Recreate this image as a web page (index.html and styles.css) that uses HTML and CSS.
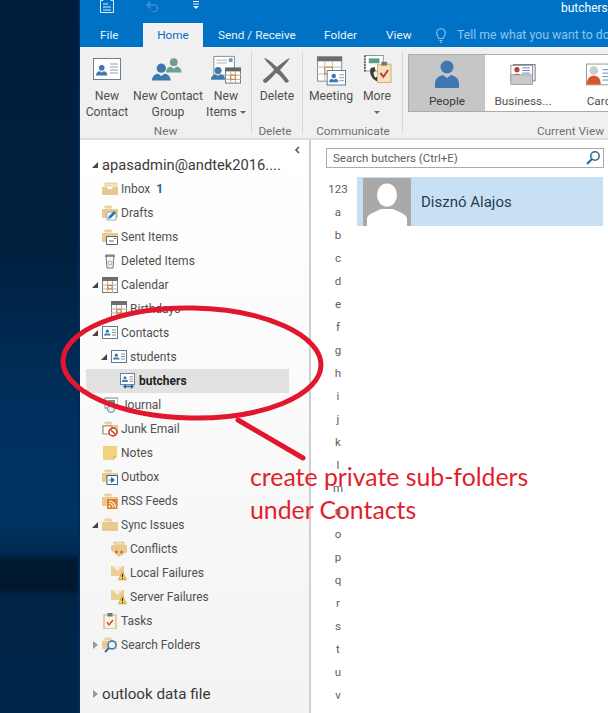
FILE: index.html
```html
<!DOCTYPE html>
<html lang="en">
<head>
<meta charset="utf-8">
<title>butchers - Outlook</title>
<link rel="stylesheet" href="styles.css">
</head>
<body>
<svg class="defs" width="0" height="0" aria-hidden="true">
  <defs>
    <g id="person"><circle cx="6" cy="4" r="3"/><path d="M0 12c0-3 2-4.500 4-4.500l2 1.500 2-1.500c2 0 4 1.500 4 4.500z"/></g>
    <symbol id="i-card" viewBox="0 0 16 14"><rect x=".5" y=".5" width="15" height="12" fill="#fff" stroke="#5d7a96"/><g transform="translate(2 3) scale(.55)" fill="#3f78b0"><use href="#person"/></g><path d="M10 4h4M10 6.500h4M10 9h4" stroke="#8a8a8a"/></symbol>
    <symbol id="i-folder" viewBox="0 0 16 14"><path d="M3 3V1h6l1 2z" fill="#f3e0ba" stroke="#d5b882" stroke-width=".6"/><path d="M0 4h16v9H0z" fill="#e9c98d"/></symbol>
    <symbol id="i-inbox" viewBox="0 0 16 14"><path d="M3 4V1h12v3z" fill="#f4e4c3" stroke="#d7bb86" stroke-width=".7"/><path d="M0 5h5l1 2h4l1-2h5v8H0z" fill="#e6c78d"/></symbol>
    <symbol id="i-drafts" viewBox="0 0 16 16"><use href="#i-folder" width="16" height="14"/><path d="M5 7h9v8H5z" fill="#fff" stroke="#9aa"/><path d="M6 14l1-3 5-5 2 2-5 5z" fill="#2f72b3"/></symbol>
    <symbol id="i-sent" viewBox="0 0 16 16"><use href="#i-folder" width="16" height="14"/><path d="M4.500 7.500h11v8h-11z" fill="#fff" stroke="#5b6770"/><path d="M7 12h5M12 9.500h2" stroke="#5b6770"/></symbol>
    <symbol id="i-trash" viewBox="0 0 16 16"><path d="M4 2h8l-1 13H5z" fill="#f6f6f6" stroke="#777"/><path d="M3 3h10" stroke="#777" stroke-width="1.500"/><circle cx="8" cy="10" r="2" fill="none" stroke="#8fb3a8"/></symbol>
    <symbol id="i-cal" viewBox="0 0 16 16"><rect x=".5" y=".5" width="15" height="15" fill="#fff" stroke="#7a7a7a"/><rect width="16" height="4" fill="#6e6e6e"/><path d="M5.500 4v12M10.500 4v12M0 8h16M0 12h16" stroke="#b0b0b0"/><rect x="6" y="8.500" width="4" height="3.500" fill="none" stroke="#d97a26"/></symbol>
    <symbol id="i-share" viewBox="0 0 16 16"><use href="#i-card" width="15" height="13"/><path d="M4 13.500h9" stroke="#1f6cb0" stroke-width="1.500"/><path d="M6 11l-3 2.500L6 16zM11 11l3 2.500L11 16z" fill="#1f6cb0"/></symbol>
    <symbol id="i-journal" viewBox="0 0 16 16"><rect x="3" y="1" width="13" height="10" fill="#fff" stroke="#6f8f85"/><rect x="6" y="3" width="7" height="4" fill="#5d9a86"/><circle cx="9" cy="12" r="3.500" fill="#e9eef2" stroke="#6b7f92"/></symbol>
    <symbol id="i-junk" viewBox="0 0 16 16"><use href="#i-folder" width="16" height="14"/><path d="M1 5h9v8H1z" fill="#fff" stroke="#888"/><circle cx="11" cy="11" r="4" fill="#fff" stroke="#cc3a1e" stroke-width="1.500"/><path d="M8.500 8.500l5 5" stroke="#cc3a1e" stroke-width="1.500"/></symbol>
    <symbol id="i-note" viewBox="0 0 16 16"><path d="M1 1h14v10l-4 4H1z" fill="#f1d27f"/><path d="M11 15v-4h4z" fill="#d9b75e"/></symbol>
    <symbol id="i-outbox" viewBox="0 0 16 16"><use href="#i-folder" width="16" height="14"/><rect x="5" y="6.500" width="10.500" height="9" fill="#fff" stroke="#41618a"/><path d="M7 11h4M9.500 8.500l3 2.500-3 2.500z" fill="#2c6fb4" stroke="#2c6fb4"/></symbol>
    <symbol id="i-rss" viewBox="0 0 16 16"><use href="#i-folder" width="16" height="14"/><rect x="5" y="6" width="10.500" height="10" fill="#d9822b"/><circle cx="7.500" cy="13.500" r="1" fill="#fff"/><path d="M7 10.500a4 4 0 0 1 4 4M7 8a6.500 6.500 0 0 1 6.500 6.500" fill="none" stroke="#fff" stroke-width="1.200"/></symbol>
    <symbol id="i-conflict" viewBox="0 0 16 16"><path d="M3 3V1h10v3z" fill="#f3e0ba" stroke="#d5b882" stroke-width=".6"/><path d="M0 4h16v7l-8 5-8-7z" fill="#e9c98d"/><path d="M4 11h3M5.500 9.500v3M9 11h3M10.500 9.500v3" stroke="#c9541a"/></symbol>
    <symbol id="i-fail" viewBox="0 0 16 16"><path d="M0 1h13v10H0z" fill="#eccf98"/><path d="M0 1l6.500 6L13 1" fill="#f7e9cd" stroke="#d7b574" stroke-width=".7"/><path d="M11.500 6l4 9h-8z" fill="#f0c94e" stroke="#a98a28" stroke-width=".5"/><path d="M11.500 9v3M11.500 13v1.200" stroke="#222"/></symbol>
    <symbol id="i-tasks" viewBox="0 0 16 16"><rect x="2" y="2" width="12" height="14" fill="#faf3e2" stroke="#c9a970"/><rect x="5.500" y="0" width="5" height="3.500" fill="#777"/><path d="M5 9l2 3 4-5" fill="none" stroke="#c43d2b" stroke-width="1.300"/></symbol>
    <symbol id="i-search" viewBox="0 0 16 16"><use href="#i-folder" width="15" height="13"/><circle cx="10" cy="8" r="4" fill="#eaf3fa" stroke="#2f6fa8" stroke-width="1.400"/><path d="M7 11l-4 4" stroke="#2f6fa8" stroke-width="2"/></symbol>
    <symbol id="i-mag" viewBox="0 0 16 16"><circle cx="10" cy="6" r="4.200" fill="none" stroke="#2b6a8f" stroke-width="1.500"/><path d="M7 9l-5 5" stroke="#2b6a8f" stroke-width="2.200"/></symbol>
  </defs>
</svg>

<div class="screen">
  <div class="desktop"></div>
  <div class="window">
    <header class="titlebar">
      <div class="qat">
        <svg class="qat-send" viewBox="0 0 16 16"><path d="M4 .5h8v3h2.500v12h-13v-12H4z" fill="none" stroke="#dcecf8"/><path d="M4 7h5M4 10h8M4 13h8" stroke="#dcecf8"/></svg>
        <svg class="qat-undo" viewBox="0 0 14 12"><path d="M3 5h6a3.500 3.500 0 0 1 0 7H6M5.500 1.500L2 5l3.500 3.500" fill="none" stroke="#3e8fd2" stroke-width="1.600"/></svg>
        <svg class="qat-more" viewBox="0 0 8 8"><path d="M1 .5h6M1 3h6" stroke="#e6f1fa"/><path d="M1 5h6L4 8z" fill="#e6f1fa"/></svg>
      </div>
      <span class="title">butchers</span>
    </header>

    <nav class="tabs">
      <span class="tab tab-file">File</span>
      <span class="tab tab-home">Home</span>
      <span class="tab tab-send">Send / Receive</span>
      <span class="tab tab-folder">Folder</span>
      <span class="tab tab-view">View</span>
      <svg class="bulb" viewBox="0 0 10 15"><path d="M3 10.500C2 8.500 .7 7.500.7 5a4.300 4.300 0 0 1 8.600 0c0 2.500-1.300 3.500-2.300 5.500zM3.500 12.500h3M4 14.300h2" fill="none" stroke="#8cc6ef" stroke-width="1.100"/></svg>
      <span class="tell">Tell me what you want to do</span>
    </nav>

    <section class="ribbon">
      <div class="group group-new">
        <div class="buttons">
          <div class="btn btn-contact">
            <svg class="ico" viewBox="0 0 30 26"><rect x="1.500" y="2.500" width="27" height="21" fill="#fff" stroke="#6b7f92"/><g transform="translate(4 8) scale(.95)" fill="#3f78b0"><use href="#person"/></g><path d="M18 8h8M18 11h8M18 14h8M18 17h8" stroke="#999"/></svg>
            <span>New<br>Contact</span>
          </div>
          <div class="btn btn-group">
            <svg class="ico" viewBox="0 0 32 26"><g transform="translate(14 1) scale(1.300)" fill="#6fa08f"><use href="#person"/></g><g transform="translate(0 6) scale(1.550)" fill="#3f78b0"><use href="#person"/></g></svg>
            <span>New Contact<br>Group</span>
          </div>
          <div class="btn btn-items">
            <svg class="ico" viewBox="0 0 32 30"><path d="M3 1h22v20H3z" fill="#fff" stroke="#888"/><path d="M6 5h11M6 8h11" stroke="#aaa"/><rect x="19" y="3" width="4" height="4" fill="#6f97bd"/><g transform="translate(0 11) scale(1.250)" fill="#3f78b0"><use href="#person"/></g><rect x="15.500" y="13.500" width="16" height="16" fill="#fff" stroke="#777"/><rect x="15" y="13" width="17" height="4" fill="#666"/><path d="M21 17v13M26 17v13M15 21h17M15 25.500h17" stroke="#aaa"/><rect x="21" y="21" width="5" height="4.500" fill="none" stroke="#d97a26"/></svg>
            <span>New<br>Items <i class="caret"></i></span>
          </div>
        </div>
        <div class="group-label">New</div>
      </div>

      <div class="group group-delete">
        <div class="buttons">
          <div class="btn btn-delete">
            <svg class="ico" viewBox="0 0 30 28"><path d="M2 2c5 1 9 6 13 9 4-3 8-7 13-9-3 5-7 8-10 12 3 3 6 7 9 11-1 2-3 2-4 1-3-4-6-8-9-9-3 3-6 7-10 10-2 0-3-1-3-3 4-3 8-7 11-10C10 10 5 7 2 2z" fill="#6e6e6e"/></svg>
            <span>Delete</span>
          </div>
        </div>
        <div class="group-label">Delete</div>
      </div>

      <div class="group group-comm">
        <div class="buttons">
          <div class="btn btn-meeting">
            <svg class="ico" viewBox="0 0 30 30"><rect x=".5" y=".5" width="25" height="25" fill="#fff" stroke="#8a8a8a"/><rect width="26" height="5" fill="#6e6e6e"/><path d="M8 5v20M16 5v20M0 11h26M0 18h26" stroke="#bbb"/><rect x="8" y="11" width="8" height="7" fill="none" stroke="#d97a26"/><rect x="10.500" y="14.500" width="19" height="15" fill="#fff" stroke="#5d7a96"/><g transform="translate(12.500 17) scale(.8)" fill="#3f78b0"><use href="#person"/></g><path d="M23 19h5M23 22h5M23 25h5" stroke="#999"/></svg>
            <span>Meeting</span>
          </div>
          <div class="btn btn-more">
            <svg class="ico" viewBox="0 0 30 32"><rect x="2" y="1" width="19" height="16" fill="#fff" stroke="#8a9a93"/><path d="M2 1v17" stroke="#555" stroke-dasharray="1.500 1.500" stroke-width="2"/><rect x="6" y="4" width="11" height="5" fill="#5d9a86"/><path d="M8 14c-2 5 1 12 7 14l2-3-3-2-1 1c-2-2-2-4-2-6l2-1-1-4z" fill="#3c3c3c"/><rect x="15" y="10" width="14" height="19" fill="#f3e2bd" stroke="#cdb078"/><rect x="19" y="7.500" width="6" height="4" fill="#777"/><path d="M18 19l3 4 5-7" fill="none" stroke="#c43d2b" stroke-width="2"/></svg>
            <span>More<br><i class="caret"></i></span>
          </div>
        </div>
        <div class="group-label">Communicate</div>
      </div>

      <div class="group group-view">
        <div class="gallery">
          <div class="view view-on">
            <svg class="view-ico" viewBox="0 0 24 28"><circle cx="12" cy="7" r="6.500" fill="#3f78b0"/><path d="M0 28v-4c0-6 4-8 8-9l4 3 4-3c4 1 8 3 8 9v4z" fill="#3f78b0"/></svg>
            <span>People</span>
          </div>
          <div class="view">
            <svg class="view-ico" viewBox="0 0 30 26"><rect x="4" y="2" width="25" height="19" fill="#e9ecef" stroke="#6b7280"/><rect x="1" y="3" width="25" height="18" fill="#fff" stroke="#8a8a8a"/><circle cx="8" cy="8" r="3" fill="#b9443a"/><path d="M4 15c0-3 8-3 8 0z" fill="#b9443a"/><path d="M14 6h9M14 9h9M14 12h9" stroke="#4f7ca8"/><rect x="1" y="14" width="25" height="11" fill="#c9c9c9" stroke="#999"/></svg>
            <span>Business...</span>
          </div>
          <div class="view">
            <svg class="view-ico" viewBox="0 0 30 26"><rect x=".5" y="1.500" width="29" height="24" fill="#fff" stroke="#8a8a8a"/><circle cx="9" cy="9" r="5" fill="#c9cbd0"/><path d="M1 25c0-8 4-10 8-10s8 2 8 10z" fill="#d8572a"/><path d="M19 8h10M19 12h10M19 16h10M19 20h10" stroke="#4f7ca8"/></svg>
            <span>Card</span>
          </div>
        </div>
        <div class="group-label group-label-view">Current View</div>
      </div>
    </section>

    <main class="body">
      <aside class="folders">
        <svg class="collapse" viewBox="0 0 6 8"><path d="M5 1L2 4l3 3" fill="none" stroke="#555" stroke-width="1.600"/></svg>
        <div class="row account"><i class="arrow open"></i><span>apasadmin@andtek2016....</span></div>
        <div class="row"><i class="arrow"></i><svg class="fi"><use href="#i-inbox"/></svg><span>Inbox</span><b class="count">1</b></div>
        <div class="row"><i class="arrow"></i><svg class="fi"><use href="#i-drafts"/></svg><span>Drafts</span></div>
        <div class="row"><i class="arrow"></i><svg class="fi"><use href="#i-sent"/></svg><span>Sent Items</span></div>
        <div class="row"><i class="arrow"></i><svg class="fi"><use href="#i-trash"/></svg><span>Deleted Items</span></div>
        <div class="row"><i class="arrow open"></i><svg class="fi"><use href="#i-cal"/></svg><span>Calendar</span></div>
        <div class="row lvl1"><i class="arrow"></i><svg class="fi"><use href="#i-cal"/></svg><span>Birthdays</span></div>
        <div class="row"><i class="arrow open"></i><svg class="fi"><use href="#i-card"/></svg><span>Contacts</span></div>
        <div class="row lvl1"><i class="arrow open"></i><svg class="fi"><use href="#i-card"/></svg><span>students</span></div>
        <div class="row lvl2 selected"><i class="arrow"></i><svg class="fi"><use href="#i-share"/></svg><span>butchers</span></div>
        <div class="row"><i class="arrow"></i><svg class="fi"><use href="#i-journal"/></svg><span>Journal</span></div>
        <div class="row"><i class="arrow"></i><svg class="fi"><use href="#i-junk"/></svg><span>Junk Email</span></div>
        <div class="row"><i class="arrow"></i><svg class="fi"><use href="#i-note"/></svg><span>Notes</span></div>
        <div class="row"><i class="arrow"></i><svg class="fi"><use href="#i-outbox"/></svg><span>Outbox</span></div>
        <div class="row"><i class="arrow"></i><svg class="fi"><use href="#i-rss"/></svg><span>RSS Feeds</span></div>
        <div class="row"><i class="arrow open"></i><svg class="fi"><use href="#i-folder"/></svg><span>Sync Issues</span></div>
        <div class="row lvl1"><i class="arrow"></i><svg class="fi"><use href="#i-conflict"/></svg><span>Conflicts</span></div>
        <div class="row lvl1"><i class="arrow"></i><svg class="fi"><use href="#i-fail"/></svg><span>Local Failures</span></div>
        <div class="row lvl1"><i class="arrow"></i><svg class="fi"><use href="#i-fail"/></svg><span>Server Failures</span></div>
        <div class="row"><i class="arrow"></i><svg class="fi"><use href="#i-tasks"/></svg><span>Tasks</span></div>
        <div class="row"><i class="arrow closed"></i><svg class="fi"><use href="#i-search"/></svg><span>Search Folders</span></div>
        <div class="row account datafile"><i class="arrow closed"></i><span>outlook data file</span></div>
      </aside>

      <section class="people">
        <div class="searchbox">
          <span>Search butchers (Ctrl+E)</span>
          <svg class="mag"><use href="#i-mag"/></svg>
        </div>
        <div class="list">
          <div class="index">
            <span>123</span><span>a</span><span>b</span><span>c</span><span>d</span><span>e</span><span>f</span><span>g</span><span>h</span><span>i</span><span>j</span><span>k</span><span>l</span><span>m</span><span>n</span><span>o</span><span>p</span><span>q</span><span>r</span><span>s</span><span>t</span><span>u</span><span>v</span>
          </div>
          <div class="person-card">
            <svg class="avatar" viewBox="0 0 48 48"><rect width="48" height="48" fill="#a9a9a9"/><ellipse cx="24" cy="17" rx="10" ry="11.500" fill="#fff"/><path d="M4 48v-7c0-5 8-7 14-10h12c6 3 14 5 14 10v7z" fill="#fff"/></svg>
            <span class="person-name">Disznó Alajos</span>
          </div>
        </div>
      </section>
    </main>
  </div>
</div>

<svg class="markup" viewBox="0 0 608 713" aria-hidden="true">
  <ellipse cx="192" cy="363" rx="129" ry="55" transform="rotate(1 192 363)" fill="none" stroke="#e2162c" stroke-width="5"/>
  <path d="M238 420L303 458" stroke="#e2162c" stroke-width="5" stroke-linecap="round"/>
</svg>
<p class="note">create private sub-folders<br>under Contacts</p>
</body>
</html>
```
FILE: styles.css
```css
* { box-sizing: border-box; }
html, body { margin: 0; padding: 0; }
body {
  position: relative;
  width: 608px;
  height: 713px;
  overflow: hidden;
  font-family: Roboto, "Open Sans", sans-serif;
  font-size: 12px;
  color: #505050;
  background: #fff;
}
.defs { position: absolute; }
.screen { display: flex; width: 608px; height: 713px; }
.desktop {
  flex: 0 0 80px;
  background: linear-gradient(180deg,
    #001c3c 0, #00203f 250px, #002f5c 400px, #003463 520px, #002a52 553px,
    #001a33 560px, #00172f 588px, #002546 598px, #00264a 713px);
  border-right: 2px solid #002a58;
}
.window { flex: 1; display: flex; flex-direction: column; min-width: 0; }

.titlebar { height: 23px; background: #0072c6; display: flex; position: relative; flex: none; }
.qat { display: flex; align-items: flex-start; }
.qat-send { width: 16px; height: 16px; margin: -3px 0 0 19px; }
.qat-undo { width: 14px; height: 12px; margin: 0 0 0 30px; }
.qat-more { width: 8px; height: 8px; margin: 1px 0 0 33px; }
.title { position: absolute; left: 481px; top: 0; color: #fff; font-size: 12px; line-height: 17px; }

.tabs { height: 24px; flex: none; background: #0072c6; display: flex; align-items: stretch; color: #e8f3fb; font-size: 11.800px; line-height: 24px; white-space: nowrap; overflow: hidden; }
.tab, .tell { flex: none; }
.tab-file { margin-left: 20px; width: 18px; }
.tab-home { margin-left: 25px; width: 60px; background: #f1f1f1; color: #0a6cbc; text-align: center; }
.tab-send { margin-left: 15px; width: 77px; }
.tab-folder { margin-left: 29px; width: 33px; }
.tab-view { margin-left: 29px; width: 25px; }
.bulb { width: 10px; height: 15px; margin: 5px 0 0 25px; flex: none; }
.tell { margin-left: 11px; color: #8cc6ef; font-size: 12.300px; }

.ribbon { height: 93px; flex: none; background: #f0f0f0; border-bottom: 2px solid #dcdcdc; display: flex; font-size: 12.200px; }
.group { display: flex; flex-direction: column; border-right: 1px solid #d8d8d8; margin: 4px 0; }
.group-new { width: 172px; padding-left: 4px; }
.group-delete { width: 51px; }
.group-comm { width: 100px; padding-left: 5px; }
.group-view { flex: 1; border-right: 0; padding-left: 5px; min-width: 0; }
.buttons { display: flex; gap: 2px; height: 73px; flex: none; }
.btn { display: flex; flex-direction: column; align-items: center; text-align: center; line-height: 16px; white-space: nowrap; }
.btn .ico { flex: none; }
.btn-contact { width: 46px; }
.btn-group { width: 72px; }
.btn-items { width: 40px; }
.btn-delete { width: 50px; }
.btn-meeting { width: 46px; }
.btn-more { width: 42px; }
.btn-contact .ico { width: 30px; height: 26px; margin-top: 5px; margin-bottom: 6px; }
.btn-group .ico { width: 32px; height: 26px; margin-top: 5px; margin-bottom: 6px; }
.btn-items .ico { width: 30px; height: 29px; margin-top: 4px; margin-bottom: 4px; }
.btn-delete .ico { width: 30px; height: 28px; margin-top: 5px; margin-bottom: 4px; }
.btn-meeting .ico { width: 29px; height: 30px; margin-top: 5px; margin-bottom: 2px; }
.btn-more .ico { width: 29px; height: 32px; margin-top: 3px; margin-bottom: 2px; }
.caret { display: inline-block; border: 3px solid transparent; border-top: 3px solid #666; border-bottom: 0; vertical-align: middle; }
.group-label { height: 11px; text-align: center; font-size: 11.800px; line-height: 14px; color: #707070; white-space: nowrap; padding-right: 4px; }
.group-label-view { text-align: right; padding-right: 4px; margin-top: 12px; }
.gallery { display: flex; height: 58px; margin-top: 3px; background: #fff; border: 1px solid #ababab; width: 210px; flex: none; }
.view { flex: 0 0 76px; display: flex; flex-direction: column; align-items: center; line-height: 16px; white-space: nowrap; overflow: hidden; font-size: 11.800px; }
.view-on { background: #c6c6c6; color: #383838; }
.view-ico { width: 26px; height: 28px; margin: 5px 0 5px; flex: none; }

.body { flex: 1; display: flex; min-height: 0; }
.folders { position: relative; width: 231px; flex: none; padding: 13px 0 0 6px; background: linear-gradient(180deg, #fff 0, #fbfbfb 40%, #f3f3f3 100%); border-right: 2px solid #cfcfcf; }
.collapse { position: absolute; left: 214px; top: 6px; width: 6px; height: 8px; }
.row { display: flex; align-items: center; height: 24px; width: 203px; white-space: nowrap; padding-bottom: 1px; }
.lvl1 { padding-left: 9px; }
.lvl2 { padding-left: 18px; }
.selected { background: #e1e1e1; color: #222; font-weight: 700; }
.arrow { flex: 0 0 16px; height: 8px; position: relative; }
.arrow.open::before { content: ""; position: absolute; right: 4px; top: 1px; border-style: solid; border-width: 0 0 6px 6px; border-color: transparent transparent #444 transparent; }
.arrow.closed::before { content: ""; position: absolute; left: 7px; top: 0; border-style: solid; border-width: 4px 0 4px 5px; border-color: transparent transparent transparent #999; }
.fi { flex: 0 0 16px; width: 16px; height: 16px; margin-right: 3px; }
.count { color: #2d5d86; margin-left: 6px; font-weight: 700; }
.account { font-size: 14.700px; color: #3a3a3a; }
.datafile { margin-top: 25px; font-size: 15.200px; }

.people { flex: 1; min-width: 0; padding: 8px 4px 0 15px; }
.searchbox { height: 20px; border: 1px solid #ababab; display: flex; align-items: center; justify-content: space-between; padding: 0 2px 0 6px; font-size: 11.500px; color: #606060; background: #fff; }
.mag { width: 16px; height: 16px; }
.list { display: flex; margin-top: 9px; }
.index { flex: 0 0 24px; padding-top: 1px; display: flex; flex-direction: column; align-items: center; color: #606060; font-size: 11.500px; line-height: 23px; }
.person-card { flex: none; width: 246px; height: 49px; margin: 0 0 0 7px; background: #c8e0f4; display: flex; align-items: center; padding-left: 6px; }
.avatar { width: 48px; height: 48px; flex: none; }
.person-name { margin: 1px 0 0 10px; font-size: 15px; color: #2b3b4d; }

.markup { position: absolute; left: 0; top: 0; width: 608px; height: 713px; pointer-events: none; }
.note { position: absolute; left: 250px; top: 461px; margin: 0; font-family: Lato, "Open Sans", sans-serif; font-size: 24.800px; line-height: 32.500px; color: #df1f2d; white-space: nowrap; }
```
